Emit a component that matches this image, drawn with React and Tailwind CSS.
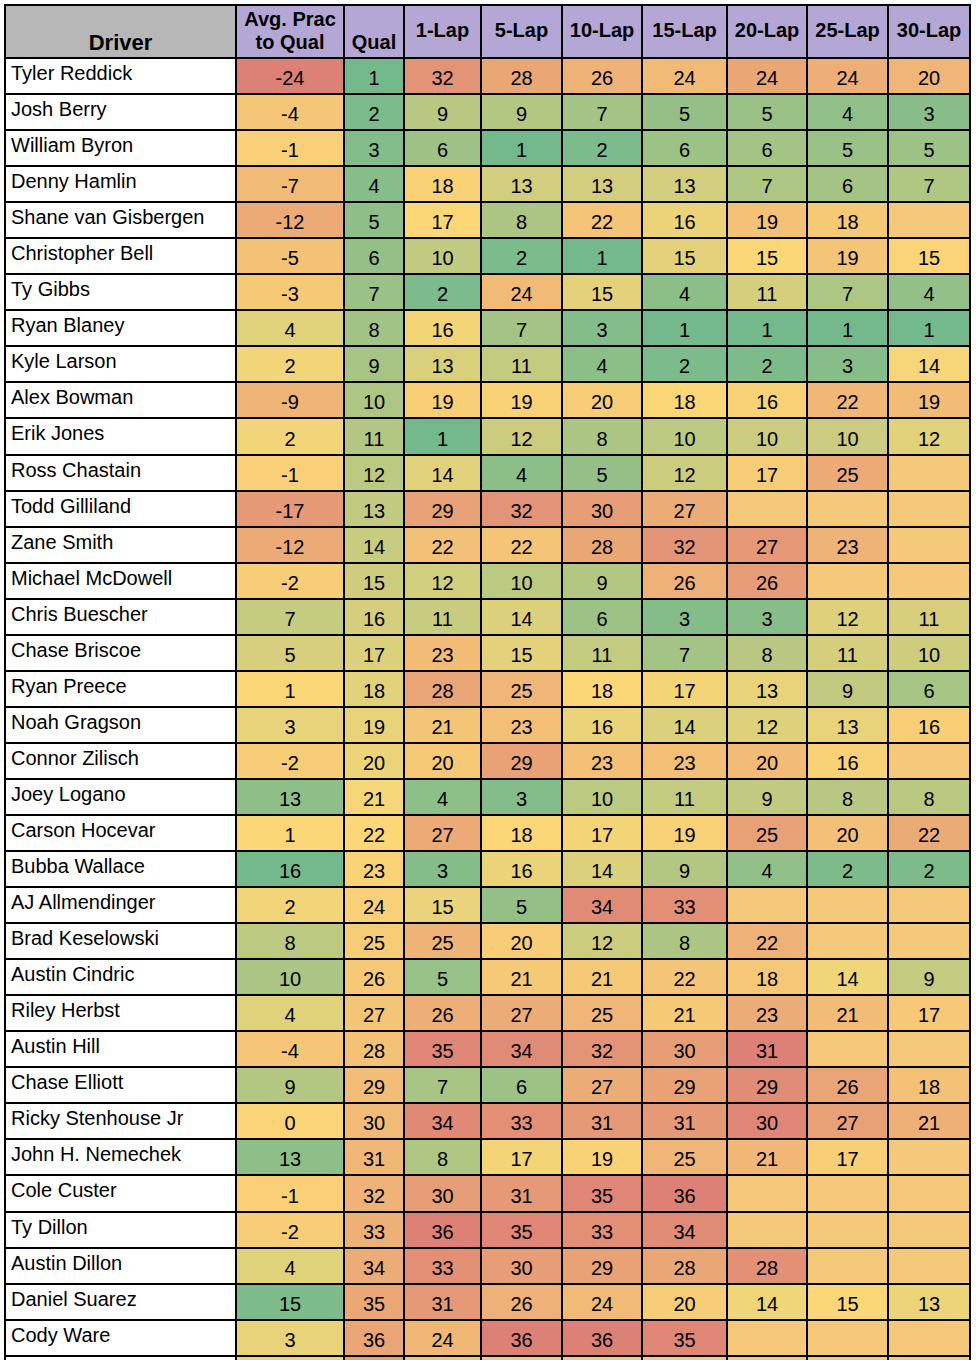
import React from "react"

const GREEN = [116, 185, 140]
const YELLOW = [251, 215, 119]
const RED = [221, 129, 118]
const EMPTY = "#f4c97a"

// [low, mid, high] per column; first one is "higher is better"
const SCALES = [
  [-24, 1, 16],
  [1, 22, 46],
  [1, 17, 36],
  [1, 18, 36],
  [1, 18, 36],
  [1, 18, 36],
  [1, 15, 31],
  [1, 15, 34],
  [1, 14.5, 29],
]

const HEADERS = ["Qual", "1-Lap", "5-Lap", "10-Lap", "15-Lap", "20-Lap", "25-Lap", "30-Lap"]

const ROWS = [
  ["Tyler Reddick", -24, 1, 32, 28, 26, 24, 24, 24, 20],
  ["Josh Berry", -4, 2, 9, 9, 7, 5, 5, 4, 3],
  ["William Byron", -1, 3, 6, 1, 2, 6, 6, 5, 5],
  ["Denny Hamlin", -7, 4, 18, 13, 13, 13, 7, 6, 7],
  ["Shane van Gisbergen", -12, 5, 17, 8, 22, 16, 19, 18, null],
  ["Christopher Bell", -5, 6, 10, 2, 1, 15, 15, 19, 15],
  ["Ty Gibbs", -3, 7, 2, 24, 15, 4, 11, 7, 4],
  ["Ryan Blaney", 4, 8, 16, 7, 3, 1, 1, 1, 1],
  ["Kyle Larson", 2, 9, 13, 11, 4, 2, 2, 3, 14],
  ["Alex Bowman", -9, 10, 19, 19, 20, 18, 16, 22, 19],
  ["Erik Jones", 2, 11, 1, 12, 8, 10, 10, 10, 12],
  ["Ross Chastain", -1, 12, 14, 4, 5, 12, 17, 25, null],
  ["Todd Gilliland", -17, 13, 29, 32, 30, 27, null, null, null],
  ["Zane Smith", -12, 14, 22, 22, 28, 32, 27, 23, null],
  ["Michael McDowell", -2, 15, 12, 10, 9, 26, 26, null, null],
  ["Chris Buescher", 7, 16, 11, 14, 6, 3, 3, 12, 11],
  ["Chase Briscoe", 5, 17, 23, 15, 11, 7, 8, 11, 10],
  ["Ryan Preece", 1, 18, 28, 25, 18, 17, 13, 9, 6],
  ["Noah Gragson", 3, 19, 21, 23, 16, 14, 12, 13, 16],
  ["Connor Zilisch", -2, 20, 20, 29, 23, 23, 20, 16, null],
  ["Joey Logano", 13, 21, 4, 3, 10, 11, 9, 8, 8],
  ["Carson Hocevar", 1, 22, 27, 18, 17, 19, 25, 20, 22],
  ["Bubba Wallace", 16, 23, 3, 16, 14, 9, 4, 2, 2],
  ["AJ Allmendinger", 2, 24, 15, 5, 34, 33, null, null, null],
  ["Brad Keselowski", 8, 25, 25, 20, 12, 8, 22, null, null],
  ["Austin Cindric", 10, 26, 5, 21, 21, 22, 18, 14, 9],
  ["Riley Herbst", 4, 27, 26, 27, 25, 21, 23, 21, 17],
  ["Austin Hill", -4, 28, 35, 34, 32, 30, 31, null, null],
  ["Chase Elliott", 9, 29, 7, 6, 27, 29, 29, 26, 18],
  ["Ricky Stenhouse Jr", 0, 30, 34, 33, 31, 31, 30, 27, 21],
  ["John H. Nemechek", 13, 31, 8, 17, 19, 25, 21, 17, null],
  ["Cole Custer", -1, 32, 30, 31, 35, 36, null, null, null],
  ["Ty Dillon", -2, 33, 36, 35, 33, 34, null, null, null],
  ["Austin Dillon", 4, 34, 33, 30, 29, 28, 28, null, null],
  ["Daniel Suarez", 15, 35, 31, 26, 24, 20, 14, 15, 13],
  ["Cody Ware", 3, 36, 24, 36, 36, 35, null, null, null],
]

function mix(a, b, t) {
  const c = a.map((x, i) => Math.round(x + (b[i] - x) * t))
  return `rgb(${c[0]}, ${c[1]}, ${c[2]})`
}

// t < 0 goes to green, t > 0 goes to red
function heat(v, col) {
  if (v == null) return EMPTY
  const [lo, mid, hi] = SCALES[col]
  let t
  if (col === 0) t = v >= mid ? -(v - mid) / (hi - mid) : (mid - v) / (mid - lo)
  else t = v <= mid ? -(mid - v) / (mid - lo) : (v - mid) / (hi - mid)
  t = Math.max(-1, Math.min(1, t))
  return t < 0 ? mix(YELLOW, GREEN, -t) : mix(YELLOW, RED, t)
}

export default function App() {
  return (
    <div className="h-screen overflow-hidden bg-white font-['Liberation_Sans',Arial,sans-serif] text-black">
      <div className="ml-[4px] mt-[4px] grid w-fit grid-cols-[229px_106px_58px_75px_79px_78px_83px_78px_79px_80px] grid-rows-[51px] auto-rows-[34.06px] gap-[2px] bg-black p-[2px]">
        <div className="flex items-end justify-center bg-[#b7b7b7] pb-[2px] text-[22px] font-bold leading-[25px]">
          Driver
        </div>
        <div className="flex items-end justify-center bg-[#b4a7d6] pb-[3px] text-center text-[20px] font-bold leading-[23px]">
          Avg. Prac
          <br />
          to Qual
        </div>
        <div className="flex items-end justify-center bg-[#b4a7d6] pb-[3px] text-[20px] font-bold leading-[23px]">
          Qual
        </div>
        {HEADERS.slice(1).map((h) => (
          <div
            key={h}
            className="flex items-center justify-center bg-[#b4a7d6] pb-[2px] text-[20px] font-bold leading-[23px]"
          >
            {h}
          </div>
        ))}

        {ROWS.map(([name, ...vals]) => (
          <React.Fragment key={name}>
            <div className="bg-white pl-[5px] pt-[3px] text-[20px] leading-[23px] whitespace-nowrap">{name}</div>
            {vals.map((v, i) => (
              <div
                key={i}
                className="flex items-end justify-center pb-[3px] text-[20px] leading-[23px]"
                style={{ backgroundColor: heat(v, i) }}
              >
                {v ?? ""}
              </div>
            ))}
          </React.Fragment>
        ))}

        {/* next row, cut off by the window */}
        <div className="bg-white" />
        <div style={{ backgroundColor: heat(-1, 0) }} />
        <div style={{ backgroundColor: heat(37, 1) }} />
        <div style={{ backgroundColor: heat(21, 2) }} />
        {[3, 4, 5, 6, 7, 8].map((i) => (
          <div key={i} style={{ backgroundColor: EMPTY }} />
        ))}
      </div>
    </div>
  )
}
